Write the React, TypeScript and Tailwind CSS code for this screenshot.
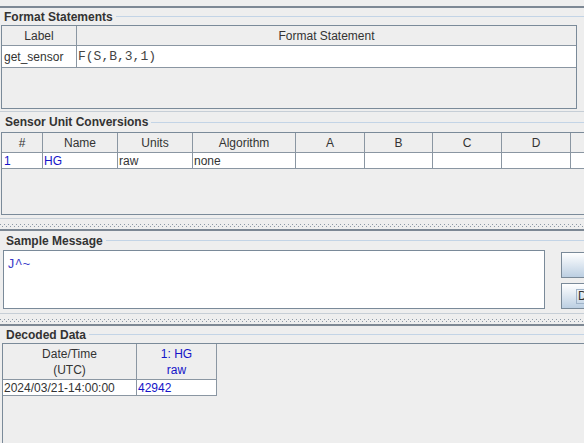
import React from 'react';

const BLUE = 'text-[#1414c8]';

function Splitter() {
  // light edge, dotted grip, dark edge of a split pane divider
  return (
    <div className="flex flex-col">
      <div className="h-px bg-[#c6ced6]" />
      <div className="h-[3px]" />
      <div className="h-[6px] flex flex-col justify-center gap-px">
        <div className="h-px bg-[repeating-linear-gradient(90deg,#8d99a6_0_1px,transparent_1px_4px)]" />
        <div className="h-px bg-[repeating-linear-gradient(90deg,transparent_0_2px,#8d99a6_2px_3px,transparent_3px_4px)]" />
      </div>
      <div className="h-px" />
      <div className="h-[2px] bg-[#7d8894]" />
    </div>
  );
}

function SectionTitle({ title, height, indent }: { title: string; height: string; indent: string }) {
  return (
    <div className={`flex items-center ${indent} ${height}`}>
      <span className="font-bold text-[#333] text-[12px] leading-none whitespace-nowrap">{title}</span>
      <div className="flex-1 h-px bg-[#c3d4e6] ml-[3px]" />
    </div>
  );
}

export default function App() {
  return (
    <div className="w-[584px] h-[443px] overflow-hidden bg-[#eeeeee] text-[12px] text-[#333] font-['Liberation_Sans',Arial,sans-serif] flex flex-col">
      <div className="h-[6px]" />
      <div className="h-[2px] bg-[#7d8894]" />

      {/* Format Statements */}
      <SectionTitle title="Format Statements" height="h-[17px]" indent="pl-[4px]" />
      <div className="ml-[1px] w-[576px] h-[84px] border border-[#7a8a99] flex flex-col shrink-0">
        <div className="flex h-[20px] border-b border-[#8a96a2]">
          <div className="w-[75px] border-r border-[#8a96a2] flex items-center justify-center">Label</div>
          <div className="flex-1 flex items-center justify-center">Format Statement</div>
        </div>
        <div className="flex h-[22px] bg-white border-b border-[#8a96a2]">
          <div className="w-[75px] border-r border-[#8a96a2] flex items-center pl-[2px]">get_sensor</div>
          <div className="flex-1 flex items-center pl-[1px] font-['Liberation_Mono','Courier_New',monospace] text-[13px] text-[#444]">
            F(S,B,3,1)
          </div>
        </div>
      </div>

      {/* Sensor Unit Conversions */}
      <div className="h-[2px]" />
      <div className="h-px bg-[#c6ced6]" />
      <SectionTitle title="Sensor Unit Conversions" height="h-[20px]" indent="pl-[5px]" />
      <div className="ml-[1px] w-[620px] h-[83px] border border-[#7a8a99] flex flex-col shrink-0">
        <div className="flex h-[20px] border-b border-[#8a96a2]">
          {[
            ['#', 'w-[41px]'],
            ['Name', 'w-[75px]'],
            ['Units', 'w-[75px]'],
            ['Algorithm', 'w-[103px]'],
            ['A', 'w-[69px]'],
            ['B', 'w-[68px]'],
            ['C', 'w-[69px]'],
            ['D', 'w-[69px]'],
            ['', 'w-[69px]'],
          ].map(([label, w], i) => (
            <div key={i} className={`${w} shrink-0 border-r border-[#8a96a2] flex items-center justify-center`}>
              {label}
            </div>
          ))}
        </div>
        <div className="flex h-[16px] bg-white border-b border-[#8a96a2]">
          <div className={`w-[41px] shrink-0 border-r border-[#8a96a2] flex items-center pl-[2px] ${BLUE}`}>1</div>
          <div className={`w-[75px] shrink-0 border-r border-[#8a96a2] flex items-center pl-[1px] ${BLUE}`}>HG</div>
          <div className="w-[75px] shrink-0 border-r border-[#8a96a2] flex items-center pl-[1px]">raw</div>
          <div className="w-[103px] shrink-0 border-r border-[#8a96a2] flex items-center pl-[1px]">none</div>
          <div className="w-[69px] shrink-0 border-r border-[#8a96a2]" />
          <div className="w-[68px] shrink-0 border-r border-[#8a96a2]" />
          <div className="w-[69px] shrink-0 border-r border-[#8a96a2]" />
          <div className="w-[69px] shrink-0 border-r border-[#8a96a2]" />
          <div className="w-[69px] shrink-0 border-r border-[#8a96a2]" />
        </div>
      </div>
      <div className="h-[3px]" />
      <Splitter />

      {/* Sample Message */}
      <SectionTitle title="Sample Message" height="h-[19px]" indent="pl-[6px]" />
      <div className="flex shrink-0">
        <div className="ml-[3px] w-[542px] shrink-0 h-[59px] bg-white border border-[#7a8a99] pl-[3px] pt-[7px] font-['Liberation_Mono','Courier_New',monospace] text-[13px] leading-none text-[#3a3ac8]">
          J^~
        </div>
        <div className="ml-[16px] mt-[2px] shrink-0 flex flex-col gap-[5px]">
          <button className="w-[80px] h-[26px] border border-[#7a8a99] bg-linear-to-b from-white to-[#bccfe2] text-[#333]">
            Load
          </button>
          <button className="w-[80px] h-[26px] border border-[#7a8a99] bg-linear-to-b from-white to-[#bccfe2] text-[#333] flex items-center pl-[14px]">
            <span className="border border-[#9fb3c8] px-px leading-[13px]">Decode</span>
          </button>
        </div>
      </div>
      <div className="h-[4px]" />
      <Splitter />

      {/* Decoded Data */}
      <SectionTitle title="Decoded Data" height="h-[17px]" indent="pl-[6px]" />
      <div className="ml-[2px] flex-1 border-l border-t border-[#7a8a99]">
        <div className="flex">
          <div className="w-[134px] h-[36px] border-r border-b border-[#8a96a2] flex flex-col items-center justify-center leading-[16px]">
            <span>Date/Time</span>
            <span>(UTC)</span>
          </div>
          <div className={`w-[80px] h-[36px] border-r border-b border-[#8a96a2] flex flex-col items-center justify-center leading-[16px] ${BLUE}`}>
            <span>1: HG</span>
            <span>raw</span>
          </div>
        </div>
        <div className="flex h-[16px]">
          <div className="w-[134px] bg-white border-r border-b border-[#8a96a2] flex items-center pl-[1px]">2024/03/21-14:00:00</div>
          <div className={`w-[80px] bg-white border-r border-b border-[#8a96a2] flex items-center pl-[1px] ${BLUE}`}>42942</div>
        </div>
      </div>
    </div>
  );
}
